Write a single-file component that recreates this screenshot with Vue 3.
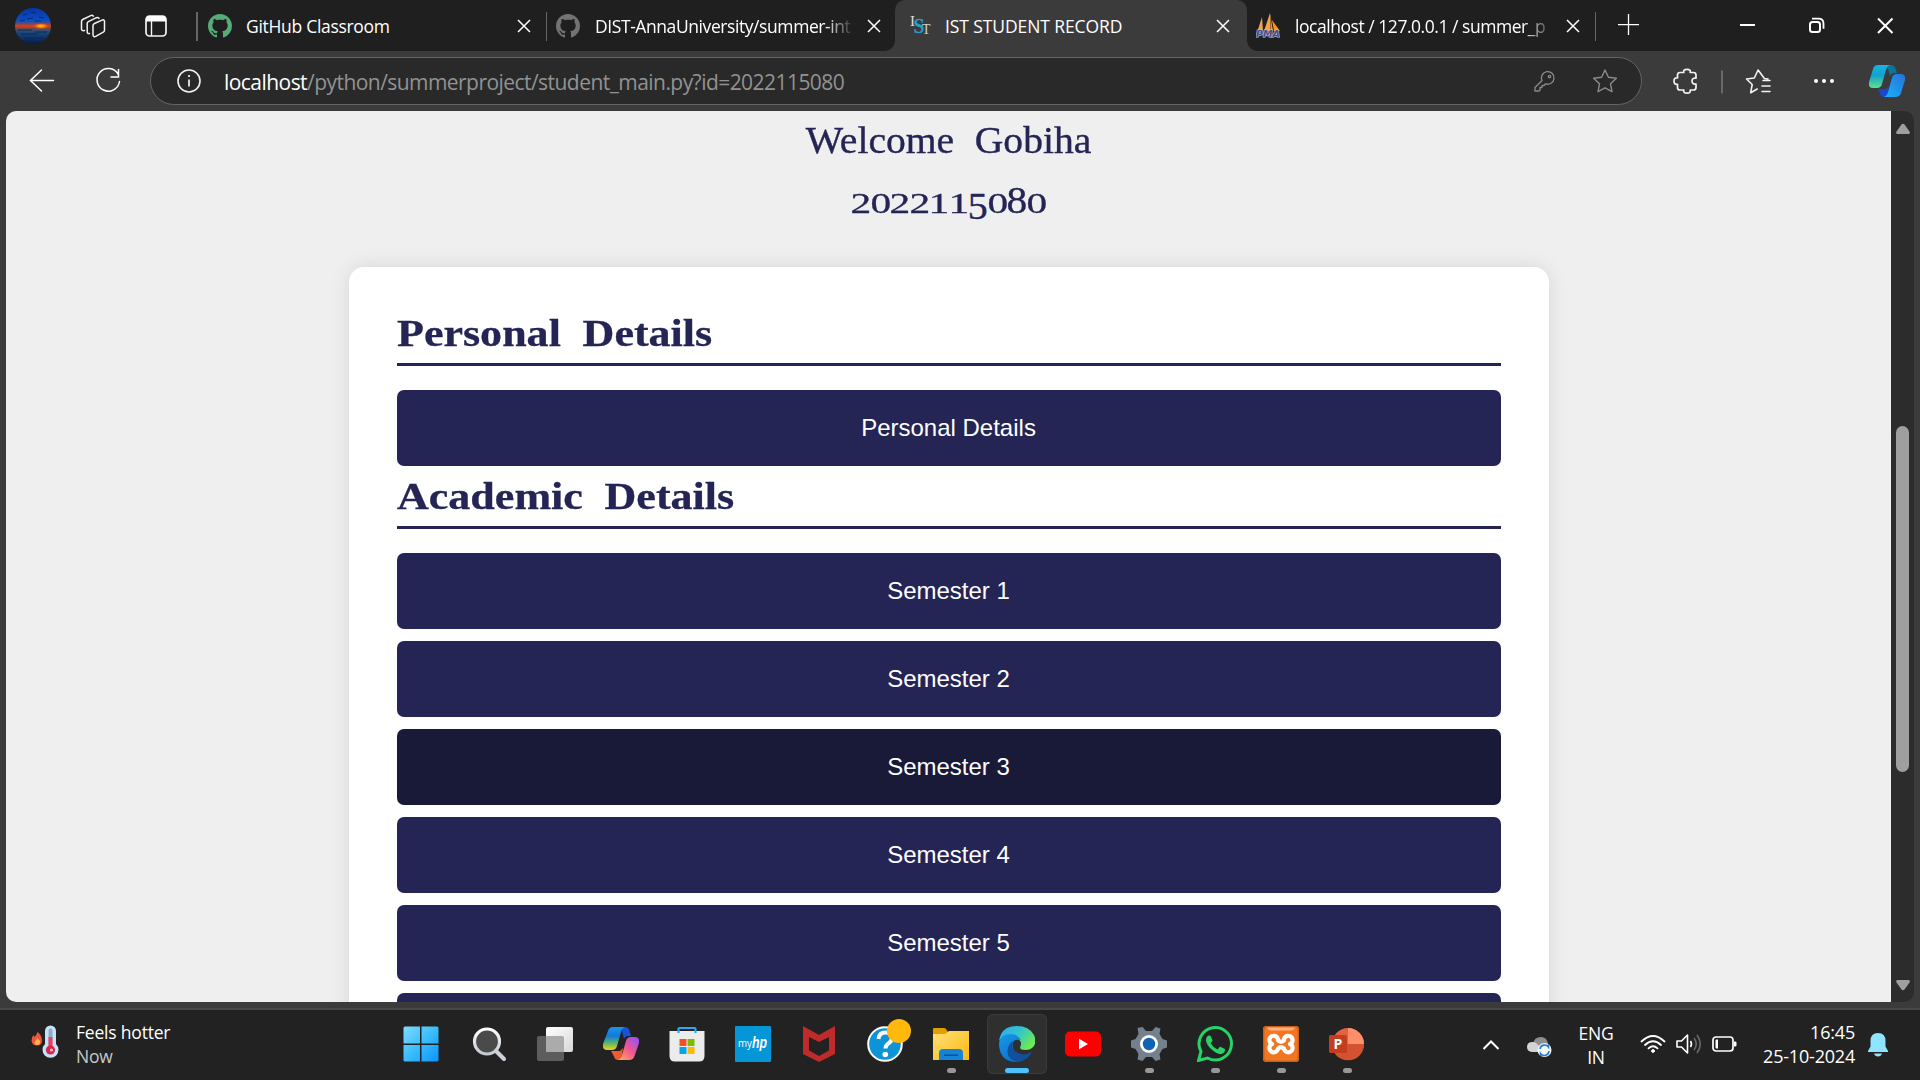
<script setup>
const semesters = [1, 2, 3, 4, 5, 6]
const active = 3
const digits = '2022115080'.split('').map(d => ({ d, kind: d === '5' ? 'low' : '68'.includes(d) ? 'tall' : 'small' }))
</script>

<template>
  <div class="screen">
    <header class="tabstrip">
      <div class="tools">
        <svg class="avatar" width="36" height="36" viewBox="0 0 36 36">
          <defs>
            <linearGradient id="sky" x1="0" y1="0" x2="0" y2="1">
              <stop offset="0" stop-color="#0835a8" /><stop offset=".36" stop-color="#0c4fc4" /><stop offset=".44" stop-color="#6d4a6a" />
              <stop offset=".5" stop-color="#e83a08" /><stop offset=".56" stop-color="#7a4a48" /><stop offset=".66" stop-color="#1b4a80" /><stop offset="1" stop-color="#061a48" />
            </linearGradient>
            <radialGradient id="sun"><stop offset="0" stop-color="#ffd21c" /><stop offset=".5" stop-color="#ff7a08" /><stop offset="1" stop-color="#ff4a00" stop-opacity="0" /></radialGradient>
          </defs>
          <circle cx="18" cy="18" r="18" fill="url(#sky)" />
          <path d="M8 7l4-1M16 4l5 1M12 11l6-1M24 9l5 1M5 13l5-1M20 13l6 0" stroke="#05267c" stroke-width="1" />
          <path d="M3 22h14M20 24h12M6 26h16M10 30h18" stroke="#082a5c" stroke-width="1" />
          <ellipse cx="26" cy="18" rx="8" ry="3" fill="url(#sun)" />
        </svg>
        <svg class="ws" width="26" height="26" viewBox="0 0 26 26" fill="none" stroke="#f2f2f2" stroke-width="1.5" stroke-linejoin="round" stroke-linecap="round">
          <path d="M13 12.5q0-1.2 1-1.7l8-3.7q2.2-.8 2.5 1.2v9q0 1.3-1.2 1.9l-7.6 4.2q-2.4.9-2.7-1.4z" />
          <path d="M9.5 20.5q-2.2.3-2.3-1.5v-8.500q0-1.300 1.200-1.900l8-3.900q1.800-.7 2.600.6" />
          <path d="M4.500 17.500q-3 .6-3-1.600v-7.500q0-1.300 1.200-1.900l8-3.900q1.800-.7 2.600.6" />
        </svg>
        <svg class="ta" width="24" height="24" viewBox="0 0 24 24"><rect x="2" y="2" width="20" height="20" rx="3.500" fill="none" stroke="#f5f5f5" stroke-width="1.700" /><path d="M2 7.500V5q0-3 3-3h14q3 0 3 3v2.500z" fill="#fff" /><path d="M7.500 7v15" stroke="#f5f5f5" stroke-width="1.400" /></svg>
      </div>
      <div class="tab t1">
        <svg class="fav" width="24" height="24" viewBox="0 0 16 16"><path fill="#57ab78" d="M8 0C3.580 0 0 3.580 0 8c0 3.540 2.290 6.530 5.470 7.590.4.070.55-.17.55-.38 0-.19-.01-.82-.01-1.490-2.010.37-2.530-.49-2.690-.94-.09-.23-.48-.94-.82-1.130-.28-.15-.68-.52-.01-.53.63-.01 1.080.58 1.230.82.72 1.210 1.870.87 2.330.66.070-.52.280-.87.510-1.070-1.780-.2-3.640-.89-3.640-3.950 0-.87.310-1.590.82-2.150-.08-.2-.36-1.020.080-2.120 0 0 .67-.21 2.200.82.64-.18 1.320-.27 2-.27s1.360.09 2 .27c1.530-1.040 2.200-.82 2.200-.82.440 1.100.160 1.920.080 2.120.510.560.820 1.270.820 2.150 0 3.070-1.870 3.750-3.650 3.950.290.250.540.730.540 1.480 0 1.070-.01 1.930-.01 2.200 0 .21.150.46.550.38A8.010 8.010 0 0 0 16 8c0-4.420-3.580-8-8-8z" /></svg>
        <span class="title">GitHub Classroom</span>
        <svg class="x" width="14" height="14" viewBox="0 0 14 14"><path d="M1 1l12 12M13 1L1 13" /></svg>
      </div>
      <div class="tab t2">
        <svg class="fav" width="24" height="24" viewBox="0 0 16 16"><path fill="#737373" d="M8 0C3.580 0 0 3.580 0 8c0 3.540 2.290 6.530 5.470 7.590.4.070.55-.17.55-.38 0-.19-.01-.82-.01-1.490-2.010.37-2.530-.49-2.690-.94-.09-.23-.48-.94-.82-1.130-.28-.15-.68-.52-.01-.53.63-.01 1.080.58 1.230.82.72 1.210 1.870.87 2.330.66.070-.52.280-.87.510-1.070-1.780-.2-3.640-.89-3.640-3.950 0-.87.310-1.590.82-2.150-.08-.2-.36-1.020.080-2.120 0 0 .67-.21 2.200.82.64-.18 1.320-.27 2-.27s1.360.09 2 .27c1.530-1.040 2.200-.82 2.200-.82.440 1.100.160 1.920.080 2.120.510.560.820 1.270.820 2.150 0 3.070-1.870 3.750-3.650 3.950.290.250.540.730.540 1.480 0 1.070-.01 1.930-.01 2.200 0 .21.150.46.550.38A8.010 8.010 0 0 0 16 8c0-4.420-3.580-8-8-8z" /></svg>
        <span class="title fade">DIST-AnnaUniversity/summer-int</span>
        <svg class="x" width="14" height="14" viewBox="0 0 14 14"><path d="M1 1l12 12M13 1L1 13" /></svg>
      </div>
      <div class="tabgap"><div class="tab t3">
        <svg class="fav" width="24" height="24" viewBox="0 0 24 24" font-family="Liberation Serif, serif"><text x="1" y="12" font-size="15" fill="#e0e0e0">I</text><text x="4.500" y="19" font-size="20" fill="#20a4cf" stroke="#20a4cf" stroke-width=".5">S</text><text x="13" y="20" font-size="14" fill="#d0d0d0">T</text></svg>
        <span class="title">IST STUDENT RECORD</span>
        <svg class="x" width="14" height="14" viewBox="0 0 14 14"><path d="M1 1l12 12M13 1L1 13" /></svg>
      </div></div>
      <div class="tab t4">
        <svg class="fav" width="24" height="26" viewBox="0 0 24 26"><path d="M6 4L1.500 18H7zM14 0L8 18h6z" fill="#f0a250" /><path d="M14 0v18h3zM16 7l8 11h-6z" fill="#f8931d" /><path d="M14.500 2v15" stroke="#8a5a20" stroke-width=".8" /><text x="0" y="24" textLength="24" lengthAdjust="spacingAndGlyphs" font-size="9.500" font-weight="bold" font-style="italic" font-family="DejaVu Sans, sans-serif" fill="#4f4f86" stroke="#c0c0d8" stroke-width="1.200" paint-order="stroke">PMA</text></svg>
        <span class="title fade">localhost / 127.0.0.1 / summer_p</span>
        <svg class="x" width="14" height="14" viewBox="0 0 14 14"><path d="M1 1l12 12M13 1L1 13" /></svg>
      </div>
      <svg class="win" width="325" height="51" viewBox="0 0 325 51" fill="none" stroke="#fff" stroke-width="1.500">
        <path d="M23 24.700h21M33.500 14v21" stroke-width="1.300" />
        <path d="M145 25h15" stroke-width="2" />
        <rect x="215" y="22" width="10" height="10" rx="2.500" stroke-width="2" /><path d="M217 18.700h6.500q5 0 5 5v5" stroke-width="1.800" />
        <path d="M283 18.500l14.500 14.500M297.500 18.500L283 33" stroke-width="2" />
      </svg>
    </header>

    <div class="toolbar">
      <svg class="nav" width="150" height="60" viewBox="0 0 150 60" fill="none" stroke="#fff" stroke-width="1.500" stroke-linecap="round">
        <path d="M53.500 29.500H30.500M41.500 19L30.500 29.500L41.500 40" />
        <path d="M118 23a11.300 11.300 0 1 0 1.500 7.500M118.500 18.500V26h-7.500" />
      </svg>
      <div class="address">
        <svg class="info" width="24" height="24" viewBox="0 0 24 24"><circle cx="12" cy="12" r="11" fill="none" stroke="#f2f2f2" stroke-width="1.600" /><path d="M12 10.500v7M12 6v2" stroke="#f2f2f2" stroke-width="1.700" /></svg>
        <span class="url"><b>localhost</b>/python/summerproject/student_main.py?id=2022115080</span>
        <svg class="key" width="22" height="22" viewBox="0 0 22 22" fill="none" stroke="#8b8b8b" stroke-width="1.300" stroke-linejoin="round"><path d="M8 10.500a6.300 6.300 0 1 1 3.500 3.300L10 15.500H8v2H6v2.500l-1 1H1v-3.500z" /><circle cx="15.500" cy="6.500" r="1.200" /></svg>
        <svg class="star" width="26" height="26" viewBox="0 0 26 26" fill="none" stroke="#8b8b8b" stroke-width="1.400" stroke-linejoin="round"><path d="M13 2l3.400 7.300 8 1-5.900 5.500 1.500 7.900-7-3.900-7 3.900 1.500-7.900L1.600 10.300l8-1z" /></svg>
      </div>
      <svg class="right" width="278" height="60" viewBox="0 0 278 60" fill="none" stroke="#f2f2f2" stroke-width="1.700" stroke-linejoin="round" stroke-linecap="round">
        <path transform="translate(1 0)" d="M37 21.500h3.800q-.8-3.200 3.200-3.200t3.200 3.200h3.300q2.500 0 2.500 2.500v3.200q-4-.5-4 2.900t4 2.900v3.500q0 2.500-2.500 2.500h-3.300q.8 3.200-3.200 3.200t-3.200-3.200H37q-2.500 0-2.500-2.500v-3.200q-3.500.5-3.500-3.200t3.500-3.200v-2.900q0-2.500 2.500-2.500z" />
        <path d="M80 19.500v23" stroke="#686868" stroke-width="2" stroke-linecap="butt" />
        <path d="M126 28l-3.600-.5-6.300-8.500-3.800 8-7.800 1 5.700 5.500-1.500 8.200 6.500-3.700M121 29.500h7M120 35h8M120 40.500h8" stroke-width="1.600" />
        <g fill="#fff" stroke="none"><circle cx="174" cy="30" r="2" /><circle cx="182" cy="30" r="2" /><circle cx="190" cy="30" r="2" /></g>
        <defs>
          <linearGradient id="ca" x1="0" y1="0" x2="0" y2="1"><stop offset="0" stop-color="#16b4e6" /><stop offset=".45" stop-color="#12a2cd" /><stop offset="1" stop-color="#5fe08d" /></linearGradient>
          <linearGradient id="cb" x1="1" y1="0" x2="0" y2="1"><stop offset="0" stop-color="#2870d4" /><stop offset="1" stop-color="#14b4ff" /></linearGradient>
        </defs>
        <g stroke="none" transform="translate(227,14)">
          <path d="M18 0h4q3.500 0 4.500 3.500L28 8h-3q-3 0-4 3z" fill="#09759d" />
          <path d="M9 24h8l3-3-2 11h-3q-3 0-4-3.500z" fill="#1648d0" />
          <path d="M9 0h12q-3 1-4 5l-4 14q-1 4-5 4H4q-5 0-4-6L4 4q1-4 5-4z" fill="url(#ca)" />
          <path d="M26 32H15q3-1 4-5l4-14q1-4 5-4h4q5 0 4 6l-4 13q-1 4-6 4z" fill="url(#cb)" />
        </g>
      </svg>
    </div>

    <div class="viewport">
      <main class="page">
        <p class="welcome">Welcome Gobiha</p>
        <p class="roll"><span v-for="(g, i) in digits" :key="i" :class="g.kind">{{ g.d }}</span></p>
        <section class="card">
          <h2><span>Personal Details</span></h2>
          <button class="btn">Personal Details</button>
          <h2><span>Academic Details</span></h2>
          <button v-for="n in semesters" :key="n" class="btn" :class="{ hover: n === active }">Semester {{ n }}</button>
        </section>
      </main>
      <aside class="scroll">
        <svg width="16" height="12" viewBox="0 0 16 12"><path d="M6.500 1.500q1.500-1.500 3 0l5 7q1 2.500-1 2.500h-11q-2 0-1-2.500z" fill="#9f9f9f" /></svg>
        <div class="thumb"></div>
        <svg class="down" width="16" height="12" viewBox="0 0 16 12"><path d="M6.500 1.500q1.500-1.500 3 0l5 7q1 2.500-1 2.500h-11q-2 0-1-2.500z" fill="#9f9f9f" /></svg>
      </aside>
    </div>

    <footer class="taskbar">
      <div class="weather">
        <svg width="30" height="36" viewBox="0 0 30 36">
          <path d="M6.500 7q4.500 3.500 4.500 8.500 0 5-5 5t-5.500-5q0-3.500 2-5.500l1 2Q5.500 10 6.500 7z" fill="#f0563a" /><path d="M6.500 13q3 2.500 2.500 5-.5 2-2.800 2-2.700 0-2.700-2.500z" fill="#ffb34a" />
          <path d="M14 6a5.500 5.500 0 0 1 11 0v13a8 8 0 1 1-11 0z" fill="#c4e2fb" /><path d="M17.500 5.500a2 2 0 0 1 4 0V20h-4z" fill="#94abc0" />
          <path d="M17.500 12h4v10h-4z" fill="#f33a5f" /><circle cx="19.500" cy="25" r="4.600" fill="#d9264b" /><circle cx="20.500" cy="25" r="1.600" fill="#ffb5c2" />
        </svg>
        <div class="wtext"><span>Feels hotter</span><span class="dim">Now</span></div>
      </div>
      <nav class="apps">
        <div class="app"><svg viewBox="0 0 36 36"><defs><linearGradient id="w" gradientUnits="userSpaceOnUse" x1="0" y1="0" x2="36" y2="36"><stop offset="0" stop-color="#83dcff" /><stop offset=".5" stop-color="#39bdfb" /><stop offset="1" stop-color="#0a93ff" /></linearGradient></defs><path fill="url(#w)" d="M2 .5h15v17H.500V2Q.5.500 2 .5zM18.500.500h15.500q1.500 0 1.500 1.500v15.500h-17zM.500 19H17v16.500H2q-1.500 0-1.500-1.500zM18.500 19h17v15q0 1.500-1.500 1.500h-15.500z" /></svg></div>
        <div class="app"><svg viewBox="0 0 36 36"><defs><linearGradient id="mg" x1="0" y1="0" x2="0" y2="1"><stop offset="0" stop-color="#fff" /><stop offset="1" stop-color="#c4c8d0" /></linearGradient></defs><path d="M25 25l8 8" stroke="#cdd1d9" stroke-width="4" stroke-linecap="round" /><circle cx="16" cy="15.500" r="12.500" fill="#4a4a4a" stroke="url(#mg)" stroke-width="3.200" /></svg></div>
        <div class="app"><svg viewBox="0 0 36 36"><defs><linearGradient id="tv" x1="0" y1="0" x2="1" y2="1"><stop offset="0" stop-color="#fff" /><stop offset="1" stop-color="#d8d8d8" /></linearGradient></defs><rect x="0" y="10" width="27" height="25" rx="2" fill="#5d5d5d" /><rect x="9" y="1" width="27" height="25" rx="2" fill="url(#tv)" /><path d="M9 10h16q2 0 2 2v14H11q-2 0-2-2z" fill="#ababab" /></svg></div>
        <div class="app"><svg viewBox="0 0 36 36"><defs>
          <linearGradient id="pa" x1="0" y1="0" x2="0" y2="1"><stop offset="0" stop-color="#1495f0" /><stop offset=".4" stop-color="#1778d8" /><stop offset=".7" stop-color="#58b86c" /><stop offset="1" stop-color="#f4d020" /></linearGradient>
          <linearGradient id="pb" x1=".8" y1="0" x2="0" y2="1"><stop offset="0" stop-color="#9c50f0" /><stop offset=".5" stop-color="#f4588c" /><stop offset="1" stop-color="#ffae60" /></linearGradient></defs>
          <path d="M18 1h4q3.500 0 4.500 3.500L28 10h-3q-3 0-4 3z" fill="#1b50d8" /><path d="M8 25h9l3-3-2 12h-3q-3 0-4-3.500z" fill="#f05a32" />
          <path d="M10 1h12q-3 1-4 5l-4 14q-1 4-5 4H4q-5 0-4-6L5 5q1-4 5-4z" fill="url(#pa)" /><path d="M26 34H15q3-1 4-5l4-14q1-4 5-4h4q5 0 4 6l-4.500 13q-1 4-5.500 4z" fill="url(#pb)" /></svg></div>
        <div class="app"><svg viewBox="0 0 36 36"><path d="M.500 5h35v25q0 5.500-5.500 5.500H6Q.500 35.500.500 30z" fill="#ececec" /><path d="M9.500 7V3q0-1 1-1h15q1 0 1 1v4" fill="none" stroke="#29a9f2" stroke-width="2.200" /><path d="M10.500 13h7v7h-7z" fill="#f25022" /><path d="M18.500 13h7v7h-7z" fill="#7fba00" /><path d="M10.500 21h7v7h-7z" fill="#00a4ef" /><path d="M18.500 21h7v7h-7z" fill="#ffb900" /></svg></div>
        <div class="app"><svg viewBox="0 0 36 36"><rect width="36" height="36" rx="1" fill="#0596d7" /><text x="3" y="21" font-size="10.500" textLength="14" lengthAdjust="spacingAndGlyphs" fill="#fff" font-family="Open Sans, sans-serif">my</text><text x="17" y="22" font-size="16" font-weight="bold" font-style="italic" textLength="15" lengthAdjust="spacingAndGlyphs" fill="#fff" font-family="Liberation Sans, sans-serif">hp</text></svg></div>
        <div class="app"><svg viewBox="0 0 36 36"><path fill="#bf2b2b" fill-rule="evenodd" d="M2 0l16 9L34 0v28l-16 8L2 28zM8 11v13.500l10 5.500 10-5.500V11l-10 5z" /></svg></div>
        <div class="app"><svg viewBox="0 0 36 36" overflow="visible"><circle cx="18" cy="18" r="16.800" fill="#0c94d6" stroke="#fff" stroke-width="2" /><path d="M11.500 13q.5-6.500 7-6.500t6.500 5.500q0 3-3.500 5.300-3 2-3 5.200" fill="none" stroke="#fff" stroke-width="4" /><circle cx="18.300" cy="28.500" r="2.800" fill="#fff" /><circle cx="32" cy="5" r="12" fill="#ffb90c" /></svg></div>
        <div class="app run"><svg viewBox="0 0 36 36"><defs><linearGradient id="fo" x1="0" y1="0" x2="1" y2="1"><stop offset="0" stop-color="#ffe07a" /><stop offset="1" stop-color="#fbb90e" /></linearGradient></defs><path d="M0 3q0-1 1-1h10q1 0 2 1l2 3v6H0z" fill="#e0a000" /><path d="M0 8h12l4-3h20v29H0z" fill="url(#fo)" /><path d="M6 34v-7q0-4 4-4h16q4 0 4 4v7z" fill="#1684d4" /><path d="M11 29.200h14" stroke="#0b5094" stroke-width="1.500" /></svg><i /></div>
        <div class="app current"><svg viewBox="0 0 36 36"><defs>
          <linearGradient id="e1" x1="0" y1="0" x2="1" y2=".6"><stop offset="0" stop-color="#2fa8f2" /><stop offset=".5" stop-color="#2fc5cf" /><stop offset="1" stop-color="#6eea52" /></linearGradient>
          <linearGradient id="e2" x1="0" y1="0" x2=".5" y2="1"><stop offset="0" stop-color="#1a98e8" /><stop offset="1" stop-color="#0b72d0" /></linearGradient></defs>
          <path d="M0 15Q2 0 18 0 30 0 35 9q4 10-3.500 14-4 1.500-9 .5-2-1-1-3.500 2-4-2-6.500Q10 5 0 15z" fill="url(#e1)" />
          <path d="M0 17Q2 8 11 8q8 0 11 6l-2-.3q-6-.7-6.500 5.300 0 8 10 9.500L20 36Q0 37 0 17z" fill="url(#e2)" />
          <path d="M18 14q-6 1-4.500 8 3 7 11.500 6.500 4-.5 8-3Q28 36 18 36 8 33.500 8.500 24.500 9.500 15 18 14z" fill="#124f9c" /></svg><i /></div>
        <div class="app"><svg viewBox="0 0 36 36"><rect y="5.500" width="36" height="25" rx="5" fill="#f00" /><path d="M14 12.800v10.400l9-5.200z" fill="#fff" /></svg></div>
        <div class="app run"><svg viewBox="0 0 36 36"><path d="M12.500 1.500l-.2.200L8 1.500 6.500 2l1 6-3 5L0 14.500v7L4.500 23l3 5-1 5.500 5 1.500 3.500-4h6l3.500 4 5-1.500-1-5.500 3-5 4.500-1.500v-7L31.500 13l-3-5 1-5.500-5-1.500L21 5h-6l-3.500-4-5 1.500z" fill="#74808c" /><circle cx="18" cy="18" r="9" fill="#fbfbfb" /><circle cx="18" cy="18" r="6.200" fill="#1062b4" /></svg><i /></div>
        <div class="app run"><svg viewBox="0 0 36 36"><path d="M1.500 34.500l2.500-9A16.200 16.200 0 1 1 10.500 32z" fill="none" stroke="#25d366" stroke-width="3" /><path d="M12 9.500q1.300-.3 1.800.8l1.600 3.700q.3.800-.3 1.500l-1.500 1.800q2.300 4.300 7 6.200l1.800-2.200q.6-.7 1.400-.3l3.600 1.700q.9.500.7 1.300-.7 4-5 4.200Q18.500 27.500 13 22q-5.500-6-3.500-10.500 1-1.800 2.500-2z" fill="#25d366" /></svg><i /></div>
        <div class="app run"><svg viewBox="0 0 36 36"><rect width="36" height="36" rx="3" fill="#f37623" /><rect x=".8" y=".8" width="34.400" height="34.400" rx="3" fill="none" stroke="#b9581a" /><path d="M4 1.500h28q-1 3-5 3H9q-4 0-5-3z" fill="#ffb27a" /><path d="M15 14.500q3 2.500 6 0a4.300 4.300 0 1 1 6 3.500 4.300 4.300 0 1 1-6 4.500q-3-2.500-6 0a4.300 4.300 0 1 1-6-4.500 4.300 4.300 0 1 1 6-3.500z" fill="none" stroke="#fff" stroke-width="4.200" stroke-linejoin="round" /></svg><i /></div>
        <div class="app run"><svg viewBox="0 0 36 36"><circle cx="19" cy="18" r="16" fill="#e8613f" /><path d="M19 2a16 16 0 0 1 16 16H19z" fill="#ff8f6b" /><path d="M35 18a16 16 0 0 1-30 8l14-8z" fill="#d35230" /><rect x="0" y="9" width="18" height="18" rx="1.500" fill="#c23e1c" /><text x="4.500" y="23" font-size="14" font-weight="bold" font-family="Open Sans, sans-serif" fill="#fff">P</text></svg><i /></div>
      </nav>
      <div class="tray">
        <svg width="18" height="12" viewBox="0 0 18 12" class="chev"><path d="M1.500 10L9 2.500l7.500 7.500" fill="none" stroke="#fff" stroke-width="2" /></svg>
        <svg width="25" height="22" viewBox="0 0 25 22" class="cloud"><path d="M6 8Q7 1 14 1q6 0 7 7l-3 5z" fill="#8e8e8e" /><path d="M5 16q-5-.5-5-5 0-5 5.500-5 4 0 6 3.500L17 16z" fill="#d4d4d4" /><circle cx="17.500" cy="14" r="7" fill="#f5f5f5" /><path d="M13 13a4.700 4.700 0 0 1 8.500-2v-2.500M22 15a4.700 4.700 0 0 1-8.500 2.500V20" fill="none" stroke="#1c7cd0" stroke-width="1.600" /></svg>
        <div class="lang"><span>ENG</span><span>IN</span></div>
        <svg width="26" height="20" viewBox="0 0 26 20" class="wifi" fill="none" stroke="#fff" stroke-width="1.800" stroke-linecap="round"><path d="M1.500 7.500q11.500-11 23 0M5 11q8-7.500 16 0M8.500 14.300q4.500-4 9 0" /><circle cx="13" cy="17" r="1.400" fill="#fff" stroke-width="1" /></svg>
        <svg width="26" height="22" viewBox="0 0 26 22" class="vol" fill="none" stroke="#fff" stroke-width="1.600" stroke-linejoin="round"><path d="M1 8h4.500l6-6v18l-6-6H1zM14.500 8q2 3 0 6" /><path d="M18 5q4.500 6 0 12M21 2q6.500 9 0 18" stroke="#6a6a6a" /></svg>
        <svg width="25" height="18" viewBox="0 0 25 18" class="bat"><rect x="1" y="2" width="20" height="14" rx="3" fill="none" stroke="#fff" stroke-width="1.700" /><path d="M3.500 5.500q0-1 1-1h1.500v9H4.500q-1 0-1-1zM22 6.500h1q1.500 0 1.500 1.200v2.600q0 1.200-1.500 1.200h-1z" fill="#fff" /></svg>
        <div class="clock"><span>16:45</span><span>25-10-2024</span></div>
        <svg width="20" height="24" viewBox="0 0 20 24" class="bell"><path d="M10 0q7.500 0 7.500 8v5.500L20 18v1H0v-1l2.500-4.500V8Q2.500 0 10 0zM6 20.500h8q-1 3-4 3t-4-3z" fill="#8fe4ff" /></svg>
      </div>
    </footer>
  </div>
</template>

<style>
html, body { margin: 0; overflow: hidden; background: #222; }
</style>

<style scoped>
.screen { width: 1920px; height: 1080px; display: flex; flex-direction: column; background: #3b3b3b; font-family: "Open Sans", "Noto Sans", sans-serif; overflow: hidden; color: #fff; }
svg { flex: none; display: block; }
.tabstrip { height: 51px; display: flex; background: #1f1f1f; flex: none; }
.tools { width: 196px; display: flex; align-items: center; flex: none; }
.avatar { margin-left: 15px; }
.ws { margin-left: 29px; }
.ta { margin-left: 38px; }
.tab { box-sizing: border-box; height: 51px; display: flex; align-items: center; flex: none; position: relative; }
.t1 { width: 350px; padding: 0 15px 0 12px; }
.t2 { width: 349px; padding: 0 14px 0 10px; }
.tabgap { width: 352px; background: #1f1f1f; flex: none; }
.t3 { width: 352px; padding: 0 17px 0 14px; background: #3b3b3b; border-radius: 10px 10px 0 0; }
.t3::before, .t3::after { content: ""; position: absolute; bottom: 0; width: 10px; height: 10px; }
.t3::before { left: -10px; background: radial-gradient(circle at 0 0, transparent 9.500px, #3b3b3b 10px); }
.t3::after { right: -10px; background: radial-gradient(circle at 100% 0, transparent 9.500px, #3b3b3b 10px); }
.t4 { width: 348px; padding: 0 15px 0 9px; }
.t1::before, .t1::after, .t4::after { content: ""; position: absolute; top: 12px; width: 1.500px; height: 29px; background: #666; }
.t1::before { left: 0; }
.t1::after, .t4::after { right: -1px; }
.title { margin-left: 14px; flex: 1; min-width: 0; font-size: 17.500px; letter-spacing: -0.3px; white-space: nowrap; margin-right: 12px; line-height: 24px; }
.t2 .title { margin-left: 15px; letter-spacing: -0.42px; }
.t3 .title { margin-left: 12px; letter-spacing: -0.1px; }
.t4 .title { margin-left: 15px; letter-spacing: -0.46px; }
.fade { mask-image: linear-gradient(90deg, #000 88%, transparent 100%); }
.x { fill: none; stroke: #fff; stroke-width: 1.500; }
.toolbar { height: 60px; display: flex; align-items: center; flex: none; }
.address { box-sizing: border-box; width: 1492px; height: 48px; border: 1.500px solid #646464; border-radius: 24px; background: #292929; display: flex; align-items: center; flex: none; }
.info { margin-left: 26px; }
.url { margin: 1px 0 0 23px; flex: 1; font-size: 21px; letter-spacing: -0.55px; line-height: 28px; color: #929292; white-space: nowrap; }
.url b { color: #fff; font-weight: 400; }
.star { margin: 0 23px 0 36px; }
.viewport { height: 891px; margin: 0 6px; display: flex; border-radius: 10px; overflow: hidden; flex: none; }
.page { width: 1885px; background: #efefef; color: #242455; display: flex; flex-direction: column; align-items: center; overflow: hidden; }
.welcome, .roll { margin: 0; font: 400 37px/42px "Liberation Serif", serif; white-space: nowrap; flex: none; -webkit-text-stroke: .35px #242455; }
.welcome { margin-top: 9px; word-spacing: 10px; transform: scaleX(1.070); }
.roll { margin-top: 18px; height: 42px; display: flex; }
.roll span { display: inline-block; width: 19.500px; text-align: center; transform-origin: 50% 33px; }
.roll .small { transform: scale(1.120, .77); }
.roll .low { transform: translateY(6px) scaleX(1.080); }
.roll .tall { transform: scaleX(1.120); }
.card { box-sizing: border-box; width: 1200px; margin-top: 45px; padding: 48px; background: #fff; border-radius: 15px; box-shadow: 0 0 20px rgba(0, 0, 0, .1); flex: none; display: flex; flex-direction: column; }
h2 { margin: 0 0 24px; height: 51px; border-bottom: 3px solid #242455; font: 700 37px/37px "Liberation Serif", serif; word-spacing: 9px; box-sizing: border-box; }
h2 span { display: inline-block; transform: scaleX(1.190); transform-origin: 0 50%; -webkit-text-stroke: .3px #242455; }
.btn { display: block; height: 76px; margin: 0 0 12px; border: 0; border-radius: 7px; background: #242455; color: #fff; font: 24px "Liberation Sans", Arial, sans-serif; flex: none; }
.btn.hover { background: #191938; }
.scroll { width: 23px; background: #2c2c2c; display: flex; flex-direction: column; align-items: center; padding-top: 12px; box-sizing: border-box; }
.thumb { width: 13px; height: 346px; margin-top: 291px; border-radius: 7px; background: #9f9f9f; }
.down { transform: rotate(180deg); margin-top: 207px; }
.taskbar { height: 72px; margin-top: 6px; box-sizing: border-box; border-top: 2px solid #484848; background: #222; display: flex; flex: none; }
.weather { width: 390px; display: flex; padding: 15px 0 0 31px; box-sizing: border-box; flex: none; }
.wtext { margin: -5px 0 0 15px; }
.wtext, .lang, .clock { display: flex; flex-direction: column; font-size: 17.500px; line-height: 24px; letter-spacing: -0.2px; white-space: nowrap; }
.dim { color: #c8c8c8; }
.apps { display: flex; flex: none; padding-top: 4px; }
.app { width: 60px; height: 60px; margin-right: 6px; border-radius: 6px; display: flex; flex-direction: column; align-items: center; box-sizing: border-box; padding-top: 12px; flex: none; }
.app:first-child { margin-left: 1px; margin-right: 8px; }
.app:first-child ~ .app { position: static; }
.app > svg { width: 36px; height: 36px; }
.app i { width: 9px; height: 5px; border-radius: 3px; background: #989898; margin-top: 6px; flex: none; }
.current { background: #2f2f2f; box-shadow: inset 0 0 0 1px #3b3b3b; }
.current i { width: 24px; background: #4cc2ff; }
.tray { flex: 1; display: flex; }
.chev { margin: 29px 0 0 99px; }
.cloud { margin: 26px 0 0 27px; }
.lang { width: 60px; align-items: center; margin: 11px 0 0 14px; }
.wifi { margin: 24px 0 0 14px; }
.vol { margin: 23px 0 0 10px; }
.bat { margin: 25px 0 0 10px; }
.clock { width: 118px; align-items: flex-end; margin-top: 10px; font-size: 18px; }
.bell { margin: 23px 0 0 13px; }
</style>
